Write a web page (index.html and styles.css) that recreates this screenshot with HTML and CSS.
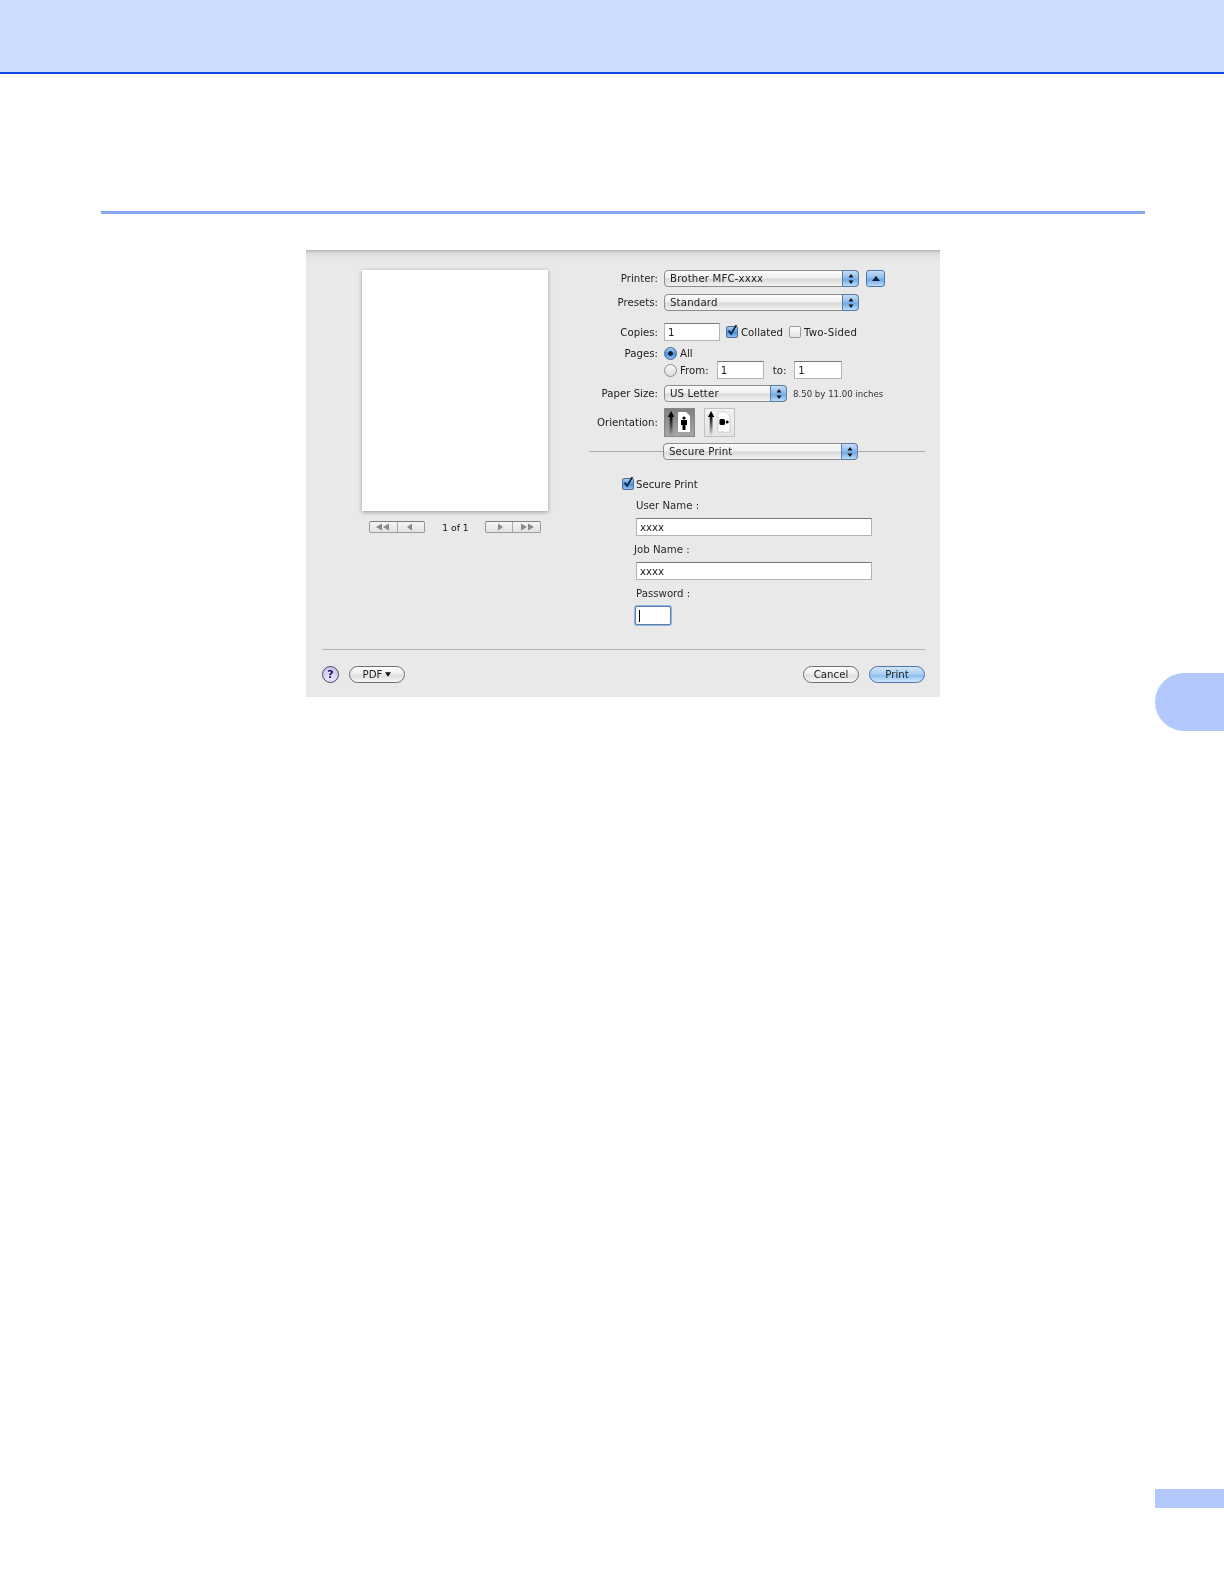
FILE: index.html
```html
<!DOCTYPE html>
<html lang="en">
<head>
<meta charset="utf-8">
<title>Secure Print</title>
<link rel="stylesheet" href="styles.css">
</head>
<body>
<svg class="defs" width="0" height="0" aria-hidden="true">
  <defs>
    <linearGradient id="tail" x1="0" y1="0" x2="0" y2="1">
      <stop offset="0" stop-color="#000"/><stop offset="1" stop-color="#000" stop-opacity="0"/>
    </linearGradient>
    <symbol id="step" viewBox="0 0 8 12">
      <polygon points="4,1 6.5,4.5 1.5,4.5" fill="#111"/>
      <polygon points="4,11 6.5,7.5 1.5,7.5" fill="#111"/>
    </symbol>
    <symbol id="check" viewBox="0 0 14 14">
      <path d="M3 6.5 L6 10.5 L12 0" fill="none" stroke="#12213c" stroke-width="2"/>
    </symbol>
    <symbol id="navl" viewBox="0 0 12 8"><polygon points="2,4 7,0.5 7,7.5" fill="#8a8a8a"/></symbol>
    <symbol id="navr" viewBox="0 0 12 8"><polygon points="10,4 5,0.5 5,7.5" fill="#8a8a8a"/></symbol>
    <symbol id="navll" viewBox="0 0 16 8"><polygon points="1,4 7,0.5 7,7.5" fill="#8a8a8a"/><polygon points="8,4 14,0.5 14,7.5" fill="#8a8a8a"/></symbol>
    <symbol id="navrr" viewBox="0 0 16 8"><polygon points="8,4 2,0.5 2,7.5" fill="#8a8a8a"/><polygon points="15,4 9,0.5 9,7.5" fill="#8a8a8a"/></symbol>
  </defs>
</svg>

<header class="top-band"></header>
<div class="section-rule"></div>

<main class="page-grid">
  <section class="dialog">
    <div class="dialog-main">
      <div class="preview">
        <div class="paper"></div>
        <div class="pager">
          <div class="nav-group">
            <span class="nav-seg"><svg class="nav-d"><use href="#navll"/></svg></span>
            <span class="nav-seg"><svg class="nav-s"><use href="#navl"/></svg></span>
          </div>
          <span class="pager-text">1 of 1</span>
          <div class="nav-group">
            <span class="nav-seg"><svg class="nav-s"><use href="#navr"/></svg></span>
            <span class="nav-seg"><svg class="nav-d"><use href="#navrr"/></svg></span>
          </div>
        </div>
      </div>

      <div class="settings">
        <div class="row">
          <span class="label">Printer:</span>
          <div class="select w-195"><span>Brother MFC-xxxx</span><i class="cap"><svg><use href="#step"/></svg></i></div>
          <div class="disclosure"><svg viewBox="0 0 10 6" width="8" height="5"><polygon points="5,0 10,6 0,6" fill="#0c1d3a"/></svg></div>
        </div>
        <div class="row m-7">
          <span class="label">Presets:</span>
          <div class="select w-195"><span>Standard</span><i class="cap"><svg><use href="#step"/></svg></i></div>
        </div>
        <div class="row m-12 h-18">
          <span class="label">Copies:</span>
          <div class="field w-56">1</div>
          <span class="box on mg-box"><svg><use href="#check"/></svg></span>
          <span class="opt">Collated</span>
          <span class="box mg-box"></span>
          <span class="opt two">Two-Sided</span>
        </div>
        <div class="row m-5 h-15">
          <span class="label">Pages:</span>
          <span class="radio on"></span>
          <span class="opt">All</span>
        </div>
        <div class="row h-18">
          <span class="label"></span>
          <span class="radio"></span>
          <span class="opt">From:</span>
          <div class="field w-47 mg-from">1</div>
          <span class="opt mg-to">to:</span>
          <div class="field w-48 mg-tof">1</div>
        </div>
        <div class="row m-6">
          <span class="label">Paper Size:</span>
          <div class="select w-123"><span>US Letter</span><i class="cap"><svg><use href="#step"/></svg></i></div>
          <span class="paper-dim">8.50 by 11.00 inches</span>
        </div>
        <div class="row m-6 h-29">
          <span class="label">Orientation:</span>
          <div class="orient pressed">
            <svg viewBox="0 0 31 29" width="31" height="29">
              <rect x="5.7" y="8" width="2.8" height="20" fill="url(#tail)"/>
              <polygon points="7.1,3 10.3,9 3.9,9" fill="#000"/>
              <path d="M14 4 H22 L26 8 V24 H14 Z" fill="#fff"/>
              <circle cx="20" cy="10" r="1.6" fill="#000"/>
              <path d="M17 12 H23 V17 H21.5 V22 H18.5 V17 H17 Z" fill="#000"/>
            </svg>
          </div>
          <div class="orient plain">
            <svg viewBox="0 0 31 29" width="31" height="29">
              <rect x="5.7" y="8" width="2.8" height="20" fill="url(#tail)"/>
              <polygon points="7.1,3 10.3,9 3.9,9" fill="#000"/>
              <path d="M14 4 H22 L26 8 V24 H14 Z" fill="#fff" stroke="#bbb" stroke-width=".6"/>
              <rect x="15.5" y="11" width="5.5" height="6" rx="1.5" fill="#000"/>
              <circle cx="23.2" cy="14" r="1.5" fill="#000"/>
            </svg>
          </div>
        </div>
        <div class="section-row">
          <div class="line l-74"></div>
          <div class="select w-195"><span>Secure Print</span><i class="cap"><svg><use href="#step"/></svg></i></div>
          <div class="line"></div>
        </div>

        <div class="secure">
          <div class="secure-check">
            <span class="box on"><svg><use href="#check"/></svg></span>
            <span class="opt">Secure Print</span>
          </div>
          <div class="cap-label first">User Name :</div>
          <div class="field wide">xxxx</div>
          <div class="cap-label job">Job Name :</div>
          <div class="field wide">xxxx</div>
          <div class="cap-label">Password :</div>
          <div class="field focus"><i class="caret"></i></div>
        </div>
      </div>
    </div>

    <footer class="dialog-foot">
      <span class="help">?</span>
      <span class="pill pdf">PDF <svg viewBox="0 0 8 6" width="6" height="5"><polygon points="0,0 8,0 4,6" fill="#111"/></svg></span>
      <span class="spacer"></span>
      <span class="pill">Cancel</span>
      <span class="pill primary">Print</span>
    </footer>
  </section>

  <div class="side-tab"></div>
  <div class="page-tab"></div>
</main>
</body>
</html>
```

FILE: styles.css
```css
* { box-sizing: border-box; }
html, body { margin: 0; padding: 0; background: #fff; }
body {
  width: 1224px;
  height: 1580px;
  overflow: hidden;
  font-family: "DejaVu Sans", sans-serif;
  font-size: 10.2px;
  color: #1c1c1c;
}
.defs { position: absolute; }

.top-band { height: 74px; background: #cbdcff; border-bottom: 2px solid #0a4de0; }
.section-rule { height: 3px; margin: 137px 79px 0 101px; background: #84a7f1; }

.page-grid {
  display: grid;
  grid-template-columns: 634px 69px;
  column-gap: 215px;
  padding: 36px 0 0 306px;
}
.dialog {
  grid-row: 1 / span 2;
  width: 634px;
  height: 447px;
  padding-top: 20px;
  background: linear-gradient(#b4b4b4 0, #d9d9d9 3px, #e6e6e6 8px, #e9e9e9 14px);
  filter: blur(.35px);
}
.side-tab {
  grid-column: 2; grid-row: 1;
  height: 58px;
  margin-top: 423px;
  background: #b3c9fd;
  border-radius: 29px 0 0 29px;
}
.page-tab {
  grid-column: 2; grid-row: 2;
  height: 19px;
  margin-top: 758px;
  background: #b3c9fd;
}

.dialog-main { display: flex; height: 379px; }

.preview { width: 186px; margin-left: 56px; }
.paper { height: 241px; background: #fff; box-shadow: 0 1px 4px rgba(0,0,0,.35); }
.pager {
  display: flex; align-items: center; justify-content: space-between;
  height: 12px; margin-top: 10px; padding: 0 7px;
}
.pager-text { font-size: 9.2px; color: #111; margin-left: 1px; }
.nav-group { display: flex; width: 56px; height: 12px; border: 1px solid #9a9a9a; border-top-color: #7c7c7c; border-radius: 2px; background: linear-gradient(#f4f4f4, #e2e2e2); }
.nav-seg { flex: 1; display: flex; align-items: center; justify-content: center; }
.nav-seg + .nav-seg { border-left: 1px solid #a9a9a9; }
.nav-s { width: 12px; height: 8px; }
.nav-d { width: 16px; height: 8px; }

.settings { width: 336px; margin-left: 41px; }
.row { display: flex; align-items: center; height: 17px; }
.m-5 { margin-top: 5px; } .m-6 { margin-top: 6px; } .m-7 { margin-top: 7px; } .m-12 { margin-top: 12px; }
.h-15 { height: 15px; } .h-18 { height: 18px; } .h-29 { height: 29px; }
.label { flex: none; width: 69px; margin-right: 6px; text-align: right; color: #222; }

.select {
  position: relative;
  flex: none;
  display: flex; align-items: center;
  height: 17px;
  padding-left: 5px;
  border: 1px solid #8b8b8b;
  border-radius: 4px;
  background: linear-gradient(#fbfbfb, #f0f0f0 45%, #d9d9d9 55%, #f3f3f3);
  letter-spacing: .15px;
}
.w-195 { width: 195px; }
.w-123 { width: 123px; }
.cap {
  position: absolute; right: -1px; top: -1px; bottom: -1px; width: 17px;
  display: flex; align-items: center; justify-content: center;
  border: 1px solid #5a7ea8;
  border-radius: 0 4px 4px 0;
  background: linear-gradient(#c8def6, #86b6ec 50%, #6ba6e6 55%, #bcdcf8);
}
.cap svg { width: 8px; height: 12px; }
.disclosure {
  flex: none;
  display: flex; align-items: center; justify-content: center;
  width: 19px; height: 17px; margin-left: 7px;
  border: 1px solid #4d77a8; border-radius: 3px;
  background: linear-gradient(#c8def6, #86b6ec 50%, #6ba6e6 55%, #bcdcf8);
}

.field {
  flex: none;
  height: 18px;
  padding: 1px 0 0 3px;
  line-height: 15px;
  background: #fff;
  border: 1px solid #b4b4b4;
  border-top-color: #777;
}
.w-56 { width: 56px; } .w-47 { width: 47px; } .w-48 { width: 48px; }
.mg-from { margin-left: 8px; }
.mg-to { margin-left: 9px; padding-left: 6px; }
.mg-tof { margin-left: 8px; }

.box {
  flex: none; display: inline-block;
  width: 12px; height: 12px;
  border: 1px solid #9a9a9a; border-radius: 2px;
  background: linear-gradient(#fdfdfd, #e3e3e3);
}
.box.on { border-color: #4a6f9e; background: linear-gradient(#a9cbf2, #4f8fdc 55%, #8fc0f0); position: relative; }
.box svg { position: absolute; left: -1px; top: -2px; width: 12px; height: 12px; overflow: visible; }
.mg-box { margin-left: 6px; }
.opt { margin-left: 3px; color: #222; }
.two { letter-spacing: .2px; }

.radio {
  flex: none; width: 13px; height: 13px;
  border: 1px solid #8b8b8b; border-radius: 50%;
  background: linear-gradient(#f9f9f9, #dcdcdc);
}
.radio.on {
  border-color: #3f6796;
  background: radial-gradient(circle, #10203c 0 2px, transparent 2.6px), linear-gradient(#a9cbf2, #4f8fdc 55%, #8fc0f0);
}

.paper-dim { margin-left: 6px; font-size: 8.6px; color: #333; }

.orient { flex: none; width: 31px; height: 29px; }
.orient svg { display: block; }
.pressed { background: linear-gradient(#7e7e7e, #a8a8a8); box-shadow: inset 0 0 0 1px #888; }
.plain { margin-left: 9px; background: linear-gradient(#f3f3f3, #e4e4e4); box-shadow: inset 0 0 0 1px #c2c2c2; }

.section-row { display: flex; align-items: center; height: 17px; margin-top: 6px; }
.line { flex: 1; height: 1px; background: #ababab; }
.l-74 { flex: none; width: 74px; }

.secure { display: flex; flex-direction: column; align-items: flex-start; padding-left: 47px; }
.secure-check { display: flex; align-items: center; height: 14px; margin-top: 17px; margin-left: -14px; }
.secure-check .opt { margin-left: 2px; }
.cap-label { height: 14px; line-height: 14px; margin-top: 7px; margin-bottom: 5px; color: #2a2a2a; }
.cap-label.first { margin-top: 8px; }
.cap-label.job { margin-left: -2px; }
.field.wide { width: 236px; height: 18px; }
.field.focus {
  position: relative;
  width: 36px; height: 19px;
  margin-left: -1px;
  border: 1px solid #5f7fa8;
  border-radius: 2px;
  box-shadow: 0 0 0 1px #8fb6ea;
}
.caret { position: absolute; left: 3px; top: 3px; width: 1px; height: 12px; background: #000; }

.dialog-foot {
  display: flex; align-items: center;
  margin: 0 15px 0 16px;
  padding-top: 16px;
  border-top: 1px solid #b5b5b5;
}
.help {
  flex: none;
  width: 17px; height: 17px; line-height: 15px;
  text-align: center; font-weight: 700; font-size: 11px; color: #1d1450;
  border: 1px solid #4b4b63; border-radius: 50%;
  background: radial-gradient(circle at 50% 70%, #f0ecff, #bdb4f0);
}
.pill {
  flex: none;
  display: inline-flex; align-items: center; justify-content: center; gap: 3px;
  width: 56px; height: 17px;
  border: 1px solid #6f6f6f; border-radius: 9px;
  background: linear-gradient(#fdfdfd, #efefef 45%, #dedede 55%, #f7f7f7);
  color: #222;
}
.pdf { margin-left: 10px; }
.spacer { flex: 1; }
.pill.primary {
  margin-left: 10px;
  border-color: #4c75a8;
  background: linear-gradient(#d3e6f9, #a6cdf3 50%, #8bbdf0 55%, #cfe8fc);
}
```
